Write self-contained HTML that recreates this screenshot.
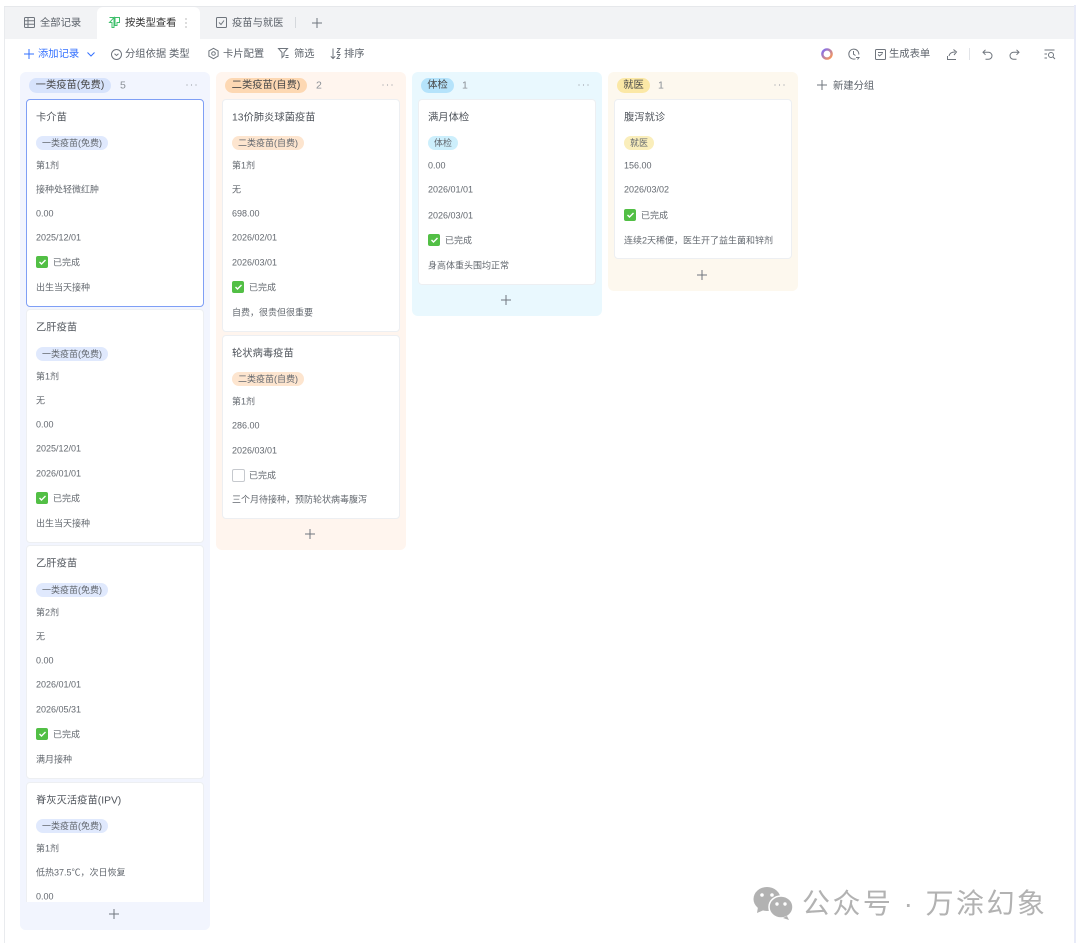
<!DOCTYPE html>
<html lang="zh"><head><meta charset="utf-8"><title>按类型查看</title>
<style>
html,body{margin:0;padding:0;background:#fff}
body{width:1080px;height:947px;position:relative;overflow:hidden;font-family:"Liberation Sans","Noto Sans CJK SC",sans-serif;color:#555;filter:blur(.35px)}
div,span,svg{position:absolute}
.t{white-space:nowrap;font-size:9px;line-height:14px;color:#63686f;transform:translateY(.5px)}
.h{font-size:10.3px;color:#5d636b;transform:translateY(1px)}
.ti{font-size:10.3px;color:#50555c;transform:translateY(1.6px)}
.col{width:190px;border-radius:6px}
.card{background:#fff;width:176px;left:6px;border:1px solid #edeff2;border-radius:4px}
.pill{height:15px;line-height:16px;border-radius:8px;font-size:10.3px;color:#4a4a4a;text-align:center;white-space:nowrap}
.tag{height:14px;line-height:14px;border-radius:7px;font-size:9px;color:#63686f;text-align:center;white-space:nowrap}
.ck{width:12px;height:12px;border-radius:2px;background:#52bf45}
.un{width:11px;height:11px;border-radius:2px;background:#fff;border:1px solid #c6c9ce}
svg{overflow:visible}
.s{fill:none;stroke:#6f757d;stroke-width:1}
</style></head><body>
<!-- frame -->
<div style="left:4px;top:6px;width:1px;height:937px;background:#e9ebee"></div>
<div style="left:4px;top:6px;width:1070px;height:1px;background:#e6e8eb"></div>
<div style="left:1074px;top:5px;width:2px;height:938px;background:#e8ebf8"></div>
<div style="left:5px;top:7px;width:1069px;height:32px;background:#f2f3f5"></div>
<div style="left:97px;top:7px;width:103px;height:32px;background:#fff;border-radius:6px 6px 0 0"></div>

<!-- tabs -->
<svg style="left:24px;top:17px" width="11" height="11" class="s"><rect x=".5" y=".5" width="10" height="10" rx="1"/><path d="M.5 3.8h10M.5 7.2h10M4 .5v10"/></svg>
<div class="t h" style="left:40px;top:15.500px">全部记录</div>
<svg style="left:109px;top:17px" width="11" height="11" fill="none" stroke="#3ebf6b" stroke-width="1"><path d="M.5.5h10v5H8V8.500H6V.5M5 .5v10H3V5.500H.5z"/></svg>
<div class="t h" style="left:125px;top:15.500px;color:#333">按类型查看</div>
<svg style="left:185px;top:18px" width="2" height="10" fill="#888"><circle cx="1" cy="1" r=".6"/><circle cx="1" cy="5" r=".6"/><circle cx="1" cy="9" r=".6"/></svg>
<svg style="left:216px;top:17px" width="11" height="11" class="s"><rect x=".5" y=".5" width="10" height="10" rx="1"/><path d="M3 5.500l2 2 3-4"/></svg>
<div class="t h" style="left:232px;top:15.500px">疫苗与就医</div>
<div style="left:295px;top:17px;width:1px;height:11px;background:#d5d8dc"></div>
<svg style="left:312px;top:18px" width="10" height="10" class="s"><path d="M5 0v10M0 5h10"/></svg>

<!-- toolbar -->
<svg style="left:24px;top:49px" width="10" height="10" fill="none" stroke="#3370ff"><path d="M5 0v10M0 5h10"/></svg>
<div class="t h" style="left:38px;top:47px;color:#3370ff">添加记录</div>
<svg style="left:87px;top:52px" width="8" height="5" fill="none" stroke="#3370ff"><path d="M.5.5L4 4 7.500.5"/></svg>
<svg style="left:111px;top:49px" width="11" height="11" class="s"><circle cx="5.500" cy="5.500" r="5"/><path d="M3.500 4.800l2 1.700 2-1.700"/></svg>
<div class="t h" style="left:125px;top:47px">分组依据 类型</div>
<svg style="left:208px;top:48px" width="11" height="11" class="s"><path d="M5.500.3l4.600 2.600v5.200l-4.600 2.600L.9 8.100V2.900z"/><circle cx="5.500" cy="5.500" r="1.800"/></svg>
<div class="t h" style="left:223px;top:47px">卡片配置</div>
<svg style="left:278px;top:48px" width="11" height="11" class="s"><path d="M.5.5h9L6 4.500v3l-2 2v-5zM7.500 7.500h3M7.500 9.500h3"/></svg>
<div class="t h" style="left:294px;top:47px">筛选</div>
<svg style="left:330px;top:48px" width="11" height="11" class="s"><path d="M3 .5v10M.8 8.300L3 10.500l2.200-2.200M7 .5h3l-3 4h3M7 6.500h3l-3 4h3"/></svg>
<div class="t h" style="left:344px;top:47px">排序</div>

<svg style="left:821px;top:48px" width="12" height="12" fill="none" stroke-width="2.400"><defs><linearGradient id="g" x1="0" y1="0" x2="1" y2="1"><stop offset="0" stop-color="#7b6cf6"/><stop offset="1" stop-color="#ff9a50"/></linearGradient></defs><circle cx="6" cy="6" r="4.600" stroke="url(#g)"/></svg>
<svg style="left:848px;top:48px" width="12" height="12" class="s"><path d="M7.500 10.800A5 5 0 1 1 10.800 6.500M5.500 3v3.200l2 1.300M8 9.500h3l-1.500 2"/></svg>
<svg style="left:875px;top:49px" width="11" height="11" class="s"><rect x=".5" y=".5" width="10" height="10" rx="1"/><path d="M3 3.500h5M3 5.500l1.500 1.500 3-2.500"/></svg>
<div class="t h" style="left:889px;top:47px">生成表单</div>
<svg style="left:947px;top:49px" width="11" height="11" class="s"><path d="M.5 7v3.500h8.500M2 7c.5-2.500 2.500-4 6-4M6.500.5L9.500 3l-2.500 3"/></svg>
<div style="left:969px;top:48px;width:1px;height:12px;background:#e2e4e8"></div>
<svg style="left:982px;top:49px" width="11" height="11" class="s"><path d="M3.500.8L1 3.300l2.500 2.500M1 3.300h5.500a3.500 3.500 0 0 1 0 7H3.500"/></svg>
<svg style="left:1009px;top:49px" width="11" height="11" class="s"><path d="M7.500.8L10 3.300 7.500 5.800M10 3.300H4.500a3.500 3.500 0 0 0 0 7h3"/></svg>
<svg style="left:1044px;top:49px" width="12" height="11" class="s"><path d="M.5 1h10M.5 5h2.500M.5 9h2.500"/><circle cx="7" cy="6" r="2.500"/><path d="M9 8l2 2"/></svg>

<!-- column 1 -->
<div class="col" style="left:20px;top:72px;height:858px;background:#f2f5fe"></div>
<div class="pill" style="left:29px;top:78px;width:82px;background:#d7e3fc">一类疫苗(免费)</div>
<div class="t" style="left:120px;top:78px;font-size:10.500px;color:#8a8f96">5</div>
<svg style="left:186px;top:84px" width="11" height="2" fill="#9a9ea5"><circle cx="1" cy="1" r=".6"/><circle cx="5.500" cy="1" r=".6"/><circle cx="10" cy="1" r=".6"/></svg>

<div class="card" style="left:26px;top:99px;height:206px;border-color:#7f9ff5"></div>
<div class="t ti" style="left:36px;top:110px">卡介苗</div>
<div class="tag" style="left:36px;top:136px;width:72px;background:#e0e9fd">一类疫苗(免费)</div>
<div class="t" style="left:36px;top:158px">第1剂</div>
<div class="t" style="left:36px;top:182px">接种处轻微红肿</div>
<div class="t" style="left:36px;top:206px">0.00</div>
<div class="t" style="left:36px;top:230px">2025/12/01</div>
<div class="ck" style="left:36px;top:256px"><svg style="left:3px;top:3px" width="7" height="6" fill="none" stroke="#fff" stroke-width="1.400"><path d="M.5 3l2 2 4-4"/></svg></div>
<div class="t" style="left:53px;top:255px">已完成</div>
<div class="t" style="left:36px;top:280px">出生当天接种</div>

<div class="card" style="left:26px;top:309px;height:232px"></div>
<div class="t ti" style="left:36px;top:320px">乙肝疫苗</div>
<div class="tag" style="left:36px;top:347px;width:72px;background:#e0e9fd">一类疫苗(免费)</div>
<div class="t" style="left:36px;top:369px">第1剂</div>
<div class="t" style="left:36px;top:393px">无</div>
<div class="t" style="left:36px;top:417px">0.00</div>
<div class="t" style="left:36px;top:441px">2025/12/01</div>
<div class="t" style="left:36px;top:466px">2026/01/01</div>
<div class="ck" style="left:36px;top:492px"><svg style="left:3px;top:3px" width="7" height="6" fill="none" stroke="#fff" stroke-width="1.400"><path d="M.5 3l2 2 4-4"/></svg></div>
<div class="t" style="left:53px;top:491px">已完成</div>
<div class="t" style="left:36px;top:516px">出生当天接种</div>

<div class="card" style="left:26px;top:545px;height:232px"></div>
<div class="t ti" style="left:36px;top:556px">乙肝疫苗</div>
<div class="tag" style="left:36px;top:583px;width:72px;background:#e0e9fd">一类疫苗(免费)</div>
<div class="t" style="left:36px;top:605px">第2剂</div>
<div class="t" style="left:36px;top:629px">无</div>
<div class="t" style="left:36px;top:653px">0.00</div>
<div class="t" style="left:36px;top:677px">2026/01/01</div>
<div class="t" style="left:36px;top:702px">2026/05/31</div>
<div class="ck" style="left:36px;top:728px"><svg style="left:3px;top:3px" width="7" height="6" fill="none" stroke="#fff" stroke-width="1.400"><path d="M.5 3l2 2 4-4"/></svg></div>
<div class="t" style="left:53px;top:727px">已完成</div>
<div class="t" style="left:36px;top:752px">满月接种</div>

<div class="card" style="left:26px;top:782px;height:130px"></div>
<div class="t ti" style="left:36px;top:793px">脊灰灭活疫苗(IPV)</div>
<div class="tag" style="left:36px;top:819px;width:72px;background:#e0e9fd">一类疫苗(免费)</div>
<div class="t" style="left:36px;top:841px">第1剂</div>
<div class="t" style="left:36px;top:865px">低热37.5℃，次日恢复</div>
<div class="t" style="left:36px;top:889px">0.00</div>
<div style="left:20px;top:902px;width:190px;height:28px;background:#f2f5fe;border-radius:0 0 6px 6px"></div>
<svg style="left:109px;top:909px" width="10" height="10" class="s"><path d="M5 0v10M0 5h10"/></svg>

<!-- column 2 -->
<div class="col" style="left:216px;top:72px;height:478px;background:#fff5ee"></div>
<div class="pill" style="left:225px;top:78px;width:82px;background:#fdd8b3">二类疫苗(自费)</div>
<div class="t" style="left:316px;top:78px;font-size:10.500px;color:#8a8f96">2</div>
<svg style="left:382px;top:84px" width="11" height="2" fill="#9a9ea5"><circle cx="1" cy="1" r=".6"/><circle cx="5.500" cy="1" r=".6"/><circle cx="10" cy="1" r=".6"/></svg>

<div class="card" style="left:222px;top:99px;height:231px"></div>
<div class="t ti" style="left:232px;top:110px">13价肺炎球菌疫苗</div>
<div class="tag" style="left:232px;top:136px;width:72px;background:#fde5cf">二类疫苗(自费)</div>
<div class="t" style="left:232px;top:158px">第1剂</div>
<div class="t" style="left:232px;top:182px">无</div>
<div class="t" style="left:232px;top:206px">698.00</div>
<div class="t" style="left:232px;top:230px">2026/02/01</div>
<div class="t" style="left:232px;top:255px">2026/03/01</div>
<div class="ck" style="left:232px;top:281px"><svg style="left:3px;top:3px" width="7" height="6" fill="none" stroke="#fff" stroke-width="1.400"><path d="M.5 3l2 2 4-4"/></svg></div>
<div class="t" style="left:249px;top:280px">已完成</div>
<div class="t" style="left:232px;top:305px">自费，很贵但很重要</div>

<div class="card" style="left:222px;top:335px;height:182px"></div>
<div class="t ti" style="left:232px;top:346px">轮状病毒疫苗</div>
<div class="tag" style="left:232px;top:372px;width:72px;background:#fde5cf">二类疫苗(自费)</div>
<div class="t" style="left:232px;top:394px">第1剂</div>
<div class="t" style="left:232px;top:418px">286.00</div>
<div class="t" style="left:232px;top:443px">2026/03/01</div>
<div class="un" style="left:232px;top:469px"></div>
<div class="t" style="left:249px;top:468px">已完成</div>
<div class="t" style="left:232px;top:492px">三个月待接种，预防轮状病毒腹泻</div>
<svg style="left:305px;top:529px" width="10" height="10" class="s"><path d="M5 0v10M0 5h10"/></svg>

<!-- column 3 -->
<div class="col" style="left:412px;top:72px;height:244px;background:#e9f8fe"></div>
<div class="pill" style="left:421px;top:78px;width:33px;background:#b5e3fb">体检</div>
<div class="t" style="left:462px;top:78px;font-size:10.500px;color:#8a8f96">1</div>
<svg style="left:578px;top:84px" width="11" height="2" fill="#9a9ea5"><circle cx="1" cy="1" r=".6"/><circle cx="5.500" cy="1" r=".6"/><circle cx="10" cy="1" r=".6"/></svg>
<div class="card" style="left:418px;top:99px;height:184px"></div>
<div class="t ti" style="left:428px;top:110px">满月体检</div>
<div class="tag" style="left:428px;top:136px;width:30px;background:#cdeffc">体检</div>
<div class="t" style="left:428px;top:158px">0.00</div>
<div class="t" style="left:428px;top:182px">2026/01/01</div>
<div class="t" style="left:428px;top:208px">2026/03/01</div>
<div class="ck" style="left:428px;top:234px"><svg style="left:3px;top:3px" width="7" height="6" fill="none" stroke="#fff" stroke-width="1.400"><path d="M.5 3l2 2 4-4"/></svg></div>
<div class="t" style="left:445px;top:233px">已完成</div>
<div class="t" style="left:428px;top:258px">身高体重头围均正常</div>
<svg style="left:501px;top:295px" width="10" height="10" class="s"><path d="M5 0v10M0 5h10"/></svg>

<!-- column 4 -->
<div class="col" style="left:608px;top:72px;height:219px;background:#fdf8ee"></div>
<div class="pill" style="left:617px;top:78px;width:33px;background:#fbe8a6">就医</div>
<div class="t" style="left:658px;top:78px;font-size:10.500px;color:#8a8f96">1</div>
<svg style="left:774px;top:84px" width="11" height="2" fill="#9a9ea5"><circle cx="1" cy="1" r=".6"/><circle cx="5.500" cy="1" r=".6"/><circle cx="10" cy="1" r=".6"/></svg>
<div class="card" style="left:614px;top:99px;height:158px"></div>
<div class="t ti" style="left:624px;top:110px">腹泻就诊</div>
<div class="tag" style="left:624px;top:136px;width:30px;background:#faeebb">就医</div>
<div class="t" style="left:624px;top:158px">156.00</div>
<div class="t" style="left:624px;top:182px">2026/03/02</div>
<div class="ck" style="left:624px;top:209px"><svg style="left:3px;top:3px" width="7" height="6" fill="none" stroke="#fff" stroke-width="1.400"><path d="M.5 3l2 2 4-4"/></svg></div>
<div class="t" style="left:641px;top:208px">已完成</div>
<div class="t" style="left:624px;top:233px">连续2天稀便，医生开了益生菌和锌剂</div>
<svg style="left:697px;top:270px" width="10" height="10" class="s"><path d="M5 0v10M0 5h10"/></svg>

<!-- new group -->
<svg style="left:817px;top:80px" width="10" height="10" class="s"><path d="M5 0v10M0 5h10"/></svg>
<div class="t h" style="left:833px;top:79px">新建分组</div>

<!-- watermark -->
<svg style="left:752px;top:886px" width="42" height="34" fill="#b2b2b2"><ellipse cx="15" cy="13" rx="13.500" ry="12"/><path d="M6 21l-1 6 7-3z"/><ellipse cx="29" cy="21" rx="12" ry="11" stroke="#fff" stroke-width="1.500"/><path d="M35 30l2 4-6-2z"/><circle cx="10" cy="9" r="1.800" fill="#fff"/><circle cx="20" cy="9" r="1.800" fill="#fff"/><circle cx="25" cy="18" r="1.700" fill="#fff"/><circle cx="33" cy="18" r="1.700" fill="#fff"/></svg>
<div style="left:802px;top:886px;font-size:28px;line-height:36px;letter-spacing:2.450px;color:#b2b2b2;white-space:nowrap">公众号 · 万涂幻象</div>
</body></html>
